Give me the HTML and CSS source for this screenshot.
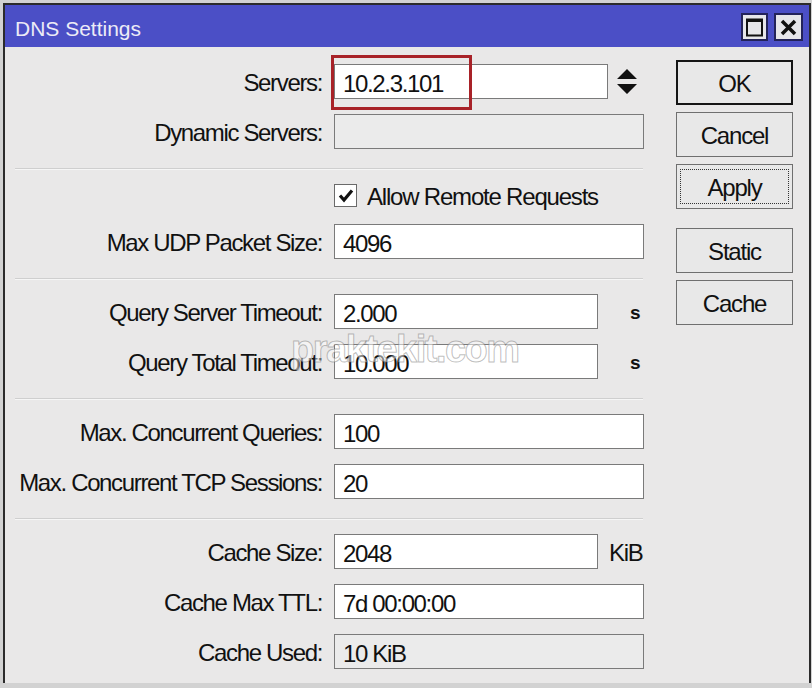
FILE: index.html
```html
<!DOCTYPE html>
<html lang="en">
<head>
    <meta charset="UTF-8">
    <title>DNS Settings</title>
    <link rel="stylesheet" href="styles.css">
</head>
<body>
    <div class="window">
        <div class="titlebar">
            <span class="title">DNS Settings</span>
            <div class="title-btns">
                <span class="tbtn">
                    <svg width="17" height="19" viewBox="0 0 17 19"><rect x="1" y="1.5" width="15" height="16" fill="none" stroke="#111" stroke-width="2"/><rect x="1" y="1" width="15" height="3" fill="#111"/></svg>
                </span>
                <span class="tbtn">
                    <svg width="17" height="17" viewBox="0 0 17 17"><path d="M2 2 L15 15 M15 2 L2 15" stroke="#111" stroke-width="3.5"/></svg>
                </span>
            </div>
        </div>

        <div class="main">
            <div class="form">
                <div class="group">
                    <div class="row">
                        <label>Servers:</label>
                        <div class="field w-mid hl">10.2.3.101</div>
                        <svg class="spin" width="20" height="26" viewBox="0 0 20 26"><path d="M0 10 L10 0 L20 10 Z M0 15 L10 25 L20 15 Z" fill="#111"/></svg>
                    </div>
                    <div class="row">
                        <label>Dynamic Servers:</label>
                        <div class="field w-full off"></div>
                    </div>
                </div>
                <div class="sep"></div>
                <div class="group tight">
                    <div class="row check-row">
                        <label></label>
                        <span class="checkbox">
                            <svg width="21" height="21" viewBox="0 0 21 21"><path d="M5 10.5 L9 15 L17 5.5" fill="none" stroke="#111" stroke-width="3.2"/></svg>
                        </span>
                        <span class="check-text">Allow Remote Requests</span>
                    </div>
                    <div class="row">
                        <label>Max UDP Packet Size:</label>
                        <div class="field w-full">4096</div>
                    </div>
                </div>
                <div class="sep"></div>
                <div class="group">
                    <div class="row">
                        <label>Query Server Timeout:</label>
                        <div class="field w-short">2.000</div>
                        <span class="unit sec">s</span>
                    </div>
                    <div class="row">
                        <label>Query Total Timeout:</label>
                        <div class="field w-short">10.000</div>
                        <span class="unit sec">s</span>
                    </div>
                </div>
                <div class="sep"></div>
                <div class="group">
                    <div class="row">
                        <label>Max. Concurrent Queries:</label>
                        <div class="field w-full">100</div>
                    </div>
                    <div class="row">
                        <label>Max. Concurrent TCP Sessions:</label>
                        <div class="field w-full">20</div>
                    </div>
                </div>
                <div class="sep"></div>
                <div class="group">
                    <div class="row">
                        <label>Cache Size:</label>
                        <div class="field w-short">2048</div>
                        <span class="unit">KiB</span>
                    </div>
                    <div class="row">
                        <label>Cache Max TTL:</label>
                        <div class="field w-full">7d 00:00:00</div>
                    </div>
                    <div class="row">
                        <label>Cache Used:</label>
                        <div class="field w-full off">10 KiB</div>
                    </div>
                </div>
            </div>

            <div class="actions">
                <button class="btn default">OK</button>
                <button class="btn">Cancel</button>
                <button class="btn focused"><span>Apply</span></button>
                <button class="btn spaced">Static</button>
                <button class="btn">Cache</button>
            </div>
        </div>

        <div class="watermark">praktekit.com</div>
    </div>
</body>
</html>
```

FILE: styles.css
```css
body {
    margin: 0;
    background: #d2d2d2;
    font-family: "Liberation Sans", Arial, sans-serif;
    color: #111;
}
.window {
    position: relative;
    margin: 3px 0 0 3px;
    width: 804px;
    height: 678px;
    border: 2px solid #2b2b2b;
    border-bottom: none;
    background: #e9e8e8;
}
.titlebar {
    display: flex;
    align-items: flex-start;
    height: 42px;
    background: #4b4fc6;
    padding: 0 6px 0 10px;
}
.title {
    margin-top: 5px;
    line-height: 37px;
    font-size: 21px;
    color: #ecebf6;
}
.title-btns {
    display: flex;
    gap: 6px;
    margin: 8px 0 0 auto;
}
.tbtn {
    display: flex;
    align-items: center;
    justify-content: center;
    width: 27px;
    height: 28px;
    box-sizing: border-box;
    border: 2px solid #23235a;
    background: #e6e6ea;
}
.tbtn:last-child {
    width: 29px;
}
.main {
    display: flex;
}
.form {
    width: 640px;
    padding-top: 17px;
    font-size: 24px;
    letter-spacing: -1.35px;
}
.group {
    display: flex;
    flex-direction: column;
    gap: 15px;
}
.group.tight {
    gap: 17px;
}
.row {
    display: flex;
    align-items: center;
    height: 35px;
}
.row label {
    width: 317px;
    margin-right: 12px;
    padding-top: 3px;
    text-align: right;
    white-space: nowrap;
}
.field {
    position: relative;
    height: 35px;
    box-sizing: border-box;
    border: 1px solid #7a7a7a;
    background: #fff;
    padding: 2px 0 0 8px;
    line-height: 33px;
}
.field.off {
    background: #ebebeb;
}
.w-full { width: 310px; }
.w-mid { width: 274px; }
.w-short { width: 264px; }
/* red marker round the server address */
.field.hl::after {
    content: "";
    position: absolute;
    left: -4px;
    top: -10px;
    width: 135px;
    height: 49px;
    border: 3px solid #a82228;
}
.spin {
    margin-left: 9px;
}
.unit {
    margin-left: 11px;
    padding-top: 3px;
}
.unit.sec {
    margin-left: 32px;
    font-weight: bold;
    font-size: 19px;
}
.check-row {
    height: 23px;
}
.checkbox {
    display: flex;
    align-items: center;
    justify-content: center;
    width: 23px;
    height: 23px;
    box-sizing: border-box;
    border: 1px solid #6a6a6a;
    background: #fff;
}
.check-text {
    margin-left: 10px;
    padding-top: 3px;
    letter-spacing: -1.2px;
}
.sep {
    margin: 19px 0 14px 10px;
    width: 628px;
    height: 1px;
    background: #cfcfcf;
    border-bottom: 1px solid #f6f6f6;
}
.actions {
    display: flex;
    flex-direction: column;
    gap: 7px;
    margin-left: 31px;
    padding-top: 13px;
}
.btn {
    width: 117px;
    height: 45px;
    box-sizing: border-box;
    border: 1px solid #6f6f6f;
    background: #e8e8e8;
    font-family: "Liberation Sans", Arial, sans-serif;
    font-size: 24px;
    letter-spacing: -1.2px;
    color: #111;
    padding: 2px 0 0;
}
.btn.default {
    border: 2px solid #151515;
}
.btn.focused {
    padding: 0;
}
.btn.focused span {
    display: flex;
    align-items: center;
    justify-content: center;
    margin: 3px;
    height: 35px;
    padding-top: 2px;
    box-sizing: border-box;
    border: 1px dotted #333;
}
.btn.spaced {
    margin-top: 12px;
}
.watermark {
    position: absolute;
    left: 286px;
    top: 323px;
    font-size: 38px;
    font-weight: bold;
    letter-spacing: -1.5px;
    color: rgba(255, 255, 255, 0.5);
    -webkit-text-stroke: 1px rgba(110, 110, 110, 0.45);
    pointer-events: none;
}
```
